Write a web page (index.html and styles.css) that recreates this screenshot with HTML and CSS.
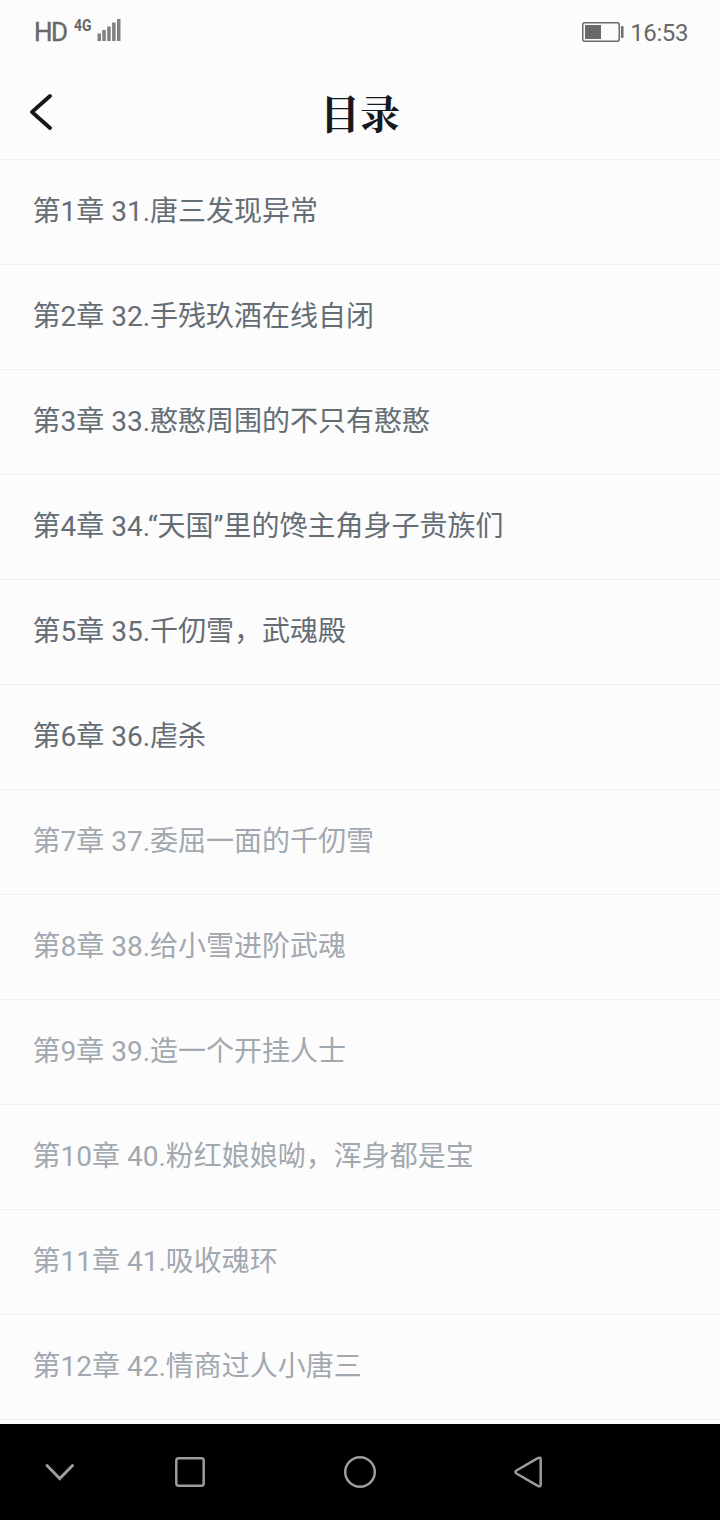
FILE: index.html
```
<!DOCTYPE html>
<html lang="zh-CN">
<head>
    <meta charset="UTF-8">
    <title>目录</title>
    <link rel="stylesheet" href="styles.css">
</head>
<body>
    <div class="status">
        <span class="hd">HD</span>
        <span class="net">4G</span>
        <svg class="signal" width="24" height="22" viewBox="0 0 24 22" fill="#808080">
            <rect x="0.5" y="14.5" width="3.5" height="7.5"/><rect x="5.3" y="11" width="3.5" height="11"/><rect x="10.2" y="7.5" width="3.5" height="14.5"/><rect x="15.1" y="3.5" width="3.5" height="18.5"/><rect x="20" y="0" width="3.5" height="22"/>
        </svg>
        <svg class="battery" width="42" height="20" viewBox="0 0 42 20">
            <rect x="0.75" y="0.75" width="36.5" height="18.5" rx="2" fill="none" stroke="#6a6a6a" stroke-width="1.5"/>
            <rect x="3" y="3" width="16" height="14" fill="#6a6a6a"/>
            <rect x="39" y="4" width="2.5" height="12" rx="1" fill="#6a6a6a"/>
        </svg>
        <span class="time">16:53</span>
    </div>

    <div class="header">
        <svg class="back" width="24" height="38" viewBox="0 0 24 38" fill="none" stroke="#15191d" stroke-width="3.8" stroke-linecap="round" stroke-linejoin="round"><path d="M22 3L4 19L22 35"/></svg>
        <h1>目录</h1>
    </div>

    <ul class="list">
        <li>第1章 31.唐三发现异常</li>
        <li>第2章 32.手残玖酒在线自闭</li>
        <li>第3章 33.憨憨周围的不只有憨憨</li>
        <li>第4章 34.“天国”里的馋主角身子贵族们</li>
        <li>第5章 35.千仞雪，武魂殿</li>
        <li>第6章 36.虐杀</li>
        <li class="locked">第7章 37.委屈一面的千仞雪</li>
        <li class="locked">第8章 38.给小雪进阶武魂</li>
        <li class="locked">第9章 39.造一个开挂人士</li>
        <li class="locked">第10章 40.粉红娘娘呦，浑身都是宝</li>
        <li class="locked">第11章 41.吸收魂环</li>
        <li class="locked">第12章 42.情商过人小唐三</li>
    </ul>

    <div class="nav">
        <svg width="720" height="96" viewBox="0 0 720 96" fill="none" stroke="#9c9c9c" stroke-width="2.5" stroke-linejoin="round">
            <path d="M47 41.5L59.7 54.5L72.5 41.5" stroke-width="3" stroke-linecap="round" stroke-linejoin="miter"/>
            <rect x="176.3" y="34.3" width="27.4" height="27.4" rx="2.5"/>
            <circle cx="360" cy="48" r="14.8"/>
            <path d="M537.8 34.2Q540.7 32.6 540.7 35.5V60.5Q540.7 63.4 537.8 61.8L516.5 49.5Q514.3 48 516.5 46.5Z"/>
        </svg>
    </div>
</body>
</html>
```
FILE: styles.css
```
* { box-sizing: border-box; margin: 0; padding: 0; }
body { width: 720px; height: 1520px; overflow: hidden; background: #fcfcfc; display: flex; flex-direction: column;
       font-family: Roboto, "Noto Sans CJK SC", sans-serif; }

.status { height: 64px; padding: 0 32px 0 34px; display: flex; align-items: center; color: #686868; }
.hd { font-size: 26px; font-weight: 400; letter-spacing: -1.5px; -webkit-text-stroke: 0.4px #686868; }
.net { width: 17px; font-size: 17px; font-weight: 700; margin: -15px 6px 0 7px; transform: scaleX(0.82); transform-origin: left; }
.signal { margin-top: -5px; }
.battery { margin: 0 6px 0 auto; }
.time { font-size: 24px; letter-spacing: -0.4px; padding-top: 2px; }

.header { height: 96px; padding: 0 28px; display: grid; grid-template-columns: 60px 1fr 60px; align-items: center; border-bottom: 1px solid #f0f0f0; }
.header h1 { font-family: "Noto Serif CJK SC", "Noto Sans CJK SC", serif; font-size: 40px; line-height: 56px; font-weight: 700; text-align: center; color: #15191d; }

.list { flex: 1; list-style: none; overflow: hidden; }
.list li { height: 105px; padding: 0 32.5px; line-height: 104px; border-bottom: 1px solid #f0f0f0;
           font-size: 28px; color: #656d75; white-space: nowrap; }
.list .locked { color: #a1a8b0; }

.nav { height: 96px; background: #000; }
.nav svg { display: block; }
```
